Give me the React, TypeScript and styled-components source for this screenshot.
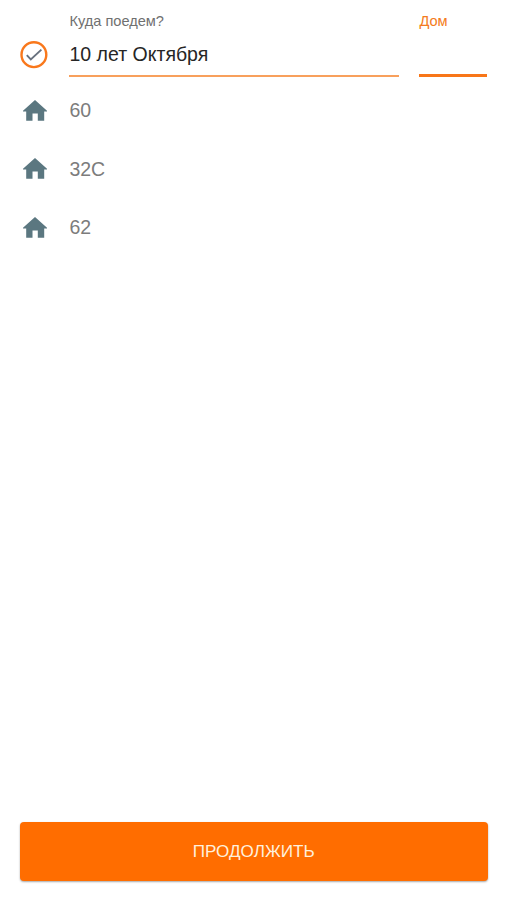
import React from "react";
import styled, { createGlobalStyle } from "styled-components";

const GlobalStyle = createGlobalStyle`
  * { box-sizing: border-box; }
  body { margin: 0; background: #fff; font-family: "Liberation Sans", Arial, sans-serif; }
`;
const Screen = styled.main`
  display: flex;
  flex-direction: column;
  height: 900px;
  padding: 0 19.5px 19.5px 20px;
  background: #fff;
`;
const AddressForm = styled.header`
  display: grid;
  grid-template-columns: 28px 330px 69px;
  column-gap: 20px;
  padding-top: 13px;
  height: 77px;
`;
const StatusIcon = styled.svg`
  display: block;
  width: 28px;
  height: 28px;
  margin-top: 28px;
`;
const Field = styled.label`
  display: flex;
  flex-direction: column;
  height: 64px;
  margin-left: 1px;
`;
const StreetField = styled(Field)`
  margin-right: -1px;
`;
const Label = styled.span<{ $active?: boolean }>`
  padding-left: 0.4px;
  font-size: 14.6px;
  line-height: 17px;
  color: ${(p) => (p.$active ? "#f47b20" : "#707070")};
`;
const Value = styled.span<{ $active?: boolean }>`
  height: 47px;
  padding: 12px 0 0 0.5px;
  font-size: 19.5px;
  line-height: 24px;
  color: #262626;
  border-bottom: ${(p) => (p.$active ? "3px solid #f87618" : "2px solid #f8a05c")};
`;
const Suggestions = styled.ul`
  list-style: none;
  margin: 4px 0 0;
  padding: 0;
`;
const Suggestion = styled.li`
  display: flex;
  align-items: center;
  gap: 22.4px;
  height: 58.6px;
  padding-left: 3px;
  font-size: 19.5px;
  line-height: 22px;
  color: #7c7c7c;
`;
const HouseNumber = styled.span`
  padding-bottom: 0.4px;
`;
const HouseIcon = styled.svg`
  width: 24px;
  height: 21px;
  fill: #5b7780;
`;
const ContinueButton = styled.button`
  margin-top: auto;
  height: 59px;
  padding: 1px 0 0;
  border: 0;
  border-radius: 4px;
  background: #ff6d00;
  color: #fff0dc;
  font: 17.1px "Liberation Sans", Arial, sans-serif;
  box-shadow: 0 1px 2px rgba(0, 0, 0, 0.35);
`;

const houses = ["60", "32С", "62"];

export default function App() {
  return (
    <>
      <GlobalStyle />
      <Screen>
        <AddressForm>
          <StatusIcon viewBox="0 0 28 28" fill="none">
            <circle cx="13.9" cy="13.7" r="12.4" stroke="#f9781c" strokeWidth="2.4" />
            <path d="M6.8 14.2l4 4.2L21.4 8.6" stroke="#68717e" strokeWidth="1.9" />
          </StatusIcon>
          <StreetField>
            <Label>Куда поедем?</Label>
            <Value>10 лет Октября</Value>
          </StreetField>
          <Field>
            <Label $active>Дом</Label>
            <Value $active />
          </Field>
        </AddressForm>
        <Suggestions>
          {houses.map((house) => (
            <Suggestion key={house}>
              <HouseIcon viewBox="0 0 24 21">
                <path d="M12 0L24 10.8V11.4H21.2V20.8H14.8V13.4H9.5V20.8H3.2V11.4H0V10.8Z" />
              </HouseIcon>
              <HouseNumber>{house}</HouseNumber>
            </Suggestion>
          ))}
        </Suggestions>
        <ContinueButton>ПРОДОЛЖИТЬ</ContinueButton>
      </Screen>
    </>
  );
}
